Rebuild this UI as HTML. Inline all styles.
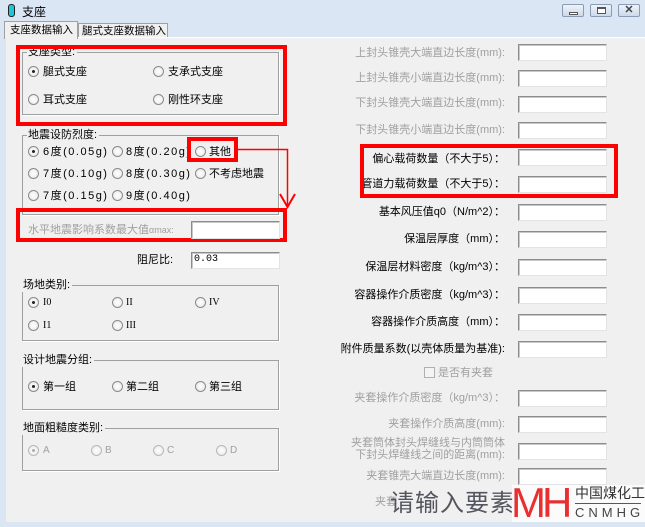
<!DOCTYPE html>
<html><head><meta charset="utf-8"><style>
*{margin:0;padding:0;box-sizing:border-box}
body{width:645px;height:527px;overflow:hidden;background:#dbe6f4;font-family:"Liberation Sans","Noto Sans CJK SC","WenQuanYi Zen Hei",sans-serif;font-size:11px;color:#000;position:relative}
.a{position:absolute;white-space:nowrap;line-height:14px}
.panel{position:absolute;left:6px;top:37px;width:639px;height:485px;background:#f0f0f0;border-top:1px solid #fff}
.grp{position:absolute;border:1px solid #a0a0a0;box-shadow:1px 1px 0 #fff}
.leg{position:absolute;background:#f0f0f0;padding:0 2px 0 1px;line-height:14px;font-size:11px}
.r{position:absolute;width:11px;height:11px;border-radius:50%;border:1px solid #8a8a8a;background:radial-gradient(#fff,#e6e6e6)}
.r.on::after{content:"";position:absolute;left:3px;top:3px;width:3px;height:3px;border-radius:50%;background:#222}
.r.dis{border-color:#b8b8b8}
.r.dis.on::after{background:#aaa}
.in{position:absolute;background:#fff;border:1px solid #8c8c8c;border-right-color:#e3e3e3;border-bottom-color:#e3e3e3;box-shadow:inset 1px 1px 0 #c8c8c8}
.g{color:#a0a0a0}
.red{position:absolute;border:4px solid #ff0000}
.lbl{position:absolute;right:140px;white-space:nowrap;line-height:14px;text-align:right}
.btn{position:absolute;top:4px;width:22px;height:13px;border:1px solid #8b9bb5;border-radius:2px;background:linear-gradient(#eef3fa,#cdd9ea)}
.d{letter-spacing:1.5px}
</style></head><body>
<div style="position:absolute;left:8px;top:4px;width:7px;height:13px;border-radius:3px;background:#1fc7d6;border:1px solid #222"></div>
<div class="a" style="left:22px;top:5px;font-size:12px">支座</div>
<div class="btn" style="left:562px"><div style="position:absolute;left:6px;top:7px;width:9px;height:3px;border:1px solid #555;background:#fff"></div></div>
<div class="btn" style="left:590px"><div style="position:absolute;left:6px;top:2px;width:9px;height:7px;border:1px solid #555;border-top-width:2px;background:#fff"></div></div>
<div class="btn" style="left:618px;text-align:center;line-height:11px;font-size:11px;font-weight:bold;color:#444">✕</div>
<div style="position:absolute;left:4px;top:21px;width:74px;height:18px;background:#f0f0f0;border:1px solid #a0a0a0;border-bottom:none;z-index:2"></div>
<div class="a" style="left:10px;top:23px;z-index:3;font-size:10.5px">支座数据输入</div>
<div style="position:absolute;left:78px;top:23px;width:90px;height:15px;background:#f0f0f0;border:1px solid #a0a0a0;border-bottom:none"></div>
<div class="a" style="left:82px;top:24px;font-size:10.5px">腿式支座数据输入</div>
<div class="panel"></div>

<div class="grp" style="left:22px;top:52px;width:257px;height:63px"></div>
<div class="leg" style="left:27px;top:45px">支座类型:</div>
<div class="r on" style="left:28px;top:66px"></div><div class="a" style="left:43px;top:65px">腿式支座</div>
<div class="r" style="left:153px;top:66px"></div><div class="a" style="left:168px;top:65px">支承式支座</div>
<div class="r" style="left:28px;top:94px"></div><div class="a" style="left:43px;top:93px">耳式支座</div>
<div class="r" style="left:153px;top:94px"></div><div class="a" style="left:168px;top:93px">刚性环支座</div>
<div class="red" style="left:16px;top:45px;width:271px;height:81px"></div>

<div class="grp" style="left:22px;top:135px;width:257px;height:80px"></div>
<div class="leg" style="left:27px;top:128px">地震设防烈度:</div>
<div class="r on" style="left:28px;top:146px"></div><div class="a d" style="left:43px;top:145px">6度(0.05g)</div>
<div class="r" style="left:112px;top:146px"></div><div class="a d" style="left:126px;top:145px">8度(0.20g)</div>
<div class="r" style="left:195px;top:146px"></div><div class="a" style="left:209px;top:145px">其他</div>
<div class="r" style="left:28px;top:168px"></div><div class="a d" style="left:43px;top:167px">7度(0.10g)</div>
<div class="r" style="left:112px;top:168px"></div><div class="a d" style="left:126px;top:167px">8度(0.30g)</div>
<div class="r" style="left:195px;top:168px"></div><div class="a" style="left:209px;top:167px">不考虑地震</div>
<div class="r" style="left:28px;top:190px"></div><div class="a d" style="left:43px;top:189px">7度(0.15g)</div>
<div class="r" style="left:112px;top:190px"></div><div class="a d" style="left:126px;top:189px">9度(0.40g)</div>
<div class="red" style="left:187px;top:137px;width:51px;height:25px"></div>
<svg style="position:absolute;left:236px;top:145px" width="64" height="66"><path d="M2 4.5H51.5V60" stroke="#f00" stroke-width="1.5" fill="none"/><path d="M44 49L51.5 62L59 49" stroke="#f00" stroke-width="2" fill="none"/></svg>
<div class="red" style="left:16px;top:208px;width:271px;height:34px"></div>
<div class="a g" style="left:28px;top:223px">水平地震影响系数最大值<span style="font-size:9px">αmax:</span></div>
<div class="in" style="left:191px;top:221px;width:89px;height:18px"></div>

<div class="a" style="left:137px;top:253px">阻尼比:</div>
<div class="in" style="left:191px;top:252px;width:89px;height:17px"><span style="position:absolute;left:2px;top:1px;font-size:10px;font-family:'Liberation Mono',monospace">0.03</span></div>

<div class="grp" style="left:22px;top:285px;width:257px;height:56px"></div>
<div class="leg" style="left:22px;top:278px">场地类别:</div>
<div class="r on" style="left:28px;top:297px"></div><div class="a" style="left:43px;top:296px;font-family:'Liberation Serif',serif;font-size:10px">I0</div>
<div class="r" style="left:112px;top:297px"></div><div class="a" style="left:126px;top:296px;font-family:'Liberation Serif',serif;font-size:10px">II</div>
<div class="r" style="left:195px;top:297px"></div><div class="a" style="left:209px;top:296px;font-family:'Liberation Serif',serif;font-size:10px">IV</div>
<div class="r" style="left:28px;top:320px"></div><div class="a" style="left:43px;top:319px;font-family:'Liberation Serif',serif;font-size:10px">I1</div>
<div class="r" style="left:112px;top:320px"></div><div class="a" style="left:126px;top:319px;font-family:'Liberation Serif',serif;font-size:10px">III</div>

<div class="grp" style="left:22px;top:360px;width:257px;height:50px"></div>
<div class="leg" style="left:22px;top:353px">设计地震分组:</div>
<div class="r on" style="left:28px;top:381px"></div><div class="a" style="left:43px;top:380px">第一组</div>
<div class="r" style="left:112px;top:381px"></div><div class="a" style="left:126px;top:380px">第二组</div>
<div class="r" style="left:195px;top:381px"></div><div class="a" style="left:209px;top:380px">第三组</div>

<div class="grp" style="left:22px;top:428px;width:257px;height:43px"></div>
<div class="leg" style="left:22px;top:421px">地面粗糙度类别:</div>
<div class="r dis on" style="left:28px;top:445px"></div><div class="a g" style="left:43px;top:444px;font-size:10px">A</div>
<div class="r dis" style="left:91px;top:445px"></div><div class="a g" style="left:105px;top:444px;font-size:10px">B</div>
<div class="r dis" style="left:153px;top:445px"></div><div class="a g" style="left:167px;top:444px;font-size:10px">C</div>
<div class="r dis" style="left:216px;top:445px"></div><div class="a g" style="left:230px;top:444px;font-size:10px">D</div>

<div class="lbl g" style="top:46px">上封头锥壳大端直边长度(mm):</div><div class="in" style="left:518px;top:44px;width:89px;height:17px"></div>
<div class="lbl g" style="top:71px">上封头锥壳小端直边长度(mm):</div><div class="in" style="left:518px;top:70px;width:89px;height:17px"></div>
<div class="lbl g" style="top:96px">下封头锥壳大端直边长度(mm):</div><div class="in" style="left:518px;top:96px;width:89px;height:17px"></div>
<div class="lbl g" style="top:123px">下封头锥壳小端直边长度(mm):</div><div class="in" style="left:518px;top:122px;width:89px;height:17px"></div>
<div class="lbl" style="top:152px">偏心载荷数量（不大于5）：</div><div class="in" style="left:518px;top:149px;width:89px;height:17px"></div>
<div class="lbl" style="top:177px">管道力载荷数量（不大于5）：</div><div class="in" style="left:518px;top:176px;width:89px;height:17px"></div>
<div class="red" style="left:360px;top:144px;width:258px;height:54px"></div>
<div class="lbl" style="top:205px">基本风压值q0（N/m^2）：</div><div class="in" style="left:518px;top:204px;width:89px;height:17px"></div>
<div class="lbl" style="top:232px">保温层厚度（mm）：</div><div class="in" style="left:518px;top:231px;width:89px;height:17px"></div>
<div class="lbl" style="top:260px">保温层材料密度（kg/m^3）：</div><div class="in" style="left:518px;top:259px;width:89px;height:17px"></div>
<div class="lbl" style="top:288px">容器操作介质密度（kg/m^3）：</div><div class="in" style="left:518px;top:287px;width:89px;height:17px"></div>
<div class="lbl" style="top:315px">容器操作介质高度（mm）：</div><div class="in" style="left:518px;top:314px;width:89px;height:17px"></div>
<div class="lbl" style="top:342px">附件质量系数(以壳体质量为基准):</div><div class="in" style="left:518px;top:341px;width:89px;height:17px"></div>
<div style="position:absolute;left:424px;top:367px;width:11px;height:11px;border:1px solid #b0b0b0;background:#f4f4f4"></div>
<div class="a g" style="left:438px;top:366px">是否有夹套</div>
<div class="lbl g" style="top:391px">夹套操作介质密度（kg/m^3）：</div><div class="in" style="left:518px;top:390px;width:89px;height:17px"></div>
<div class="lbl g" style="top:417px">夹套操作介质高度(mm):</div><div class="in" style="left:518px;top:416px;width:89px;height:17px"></div>
<div class="lbl g" style="top:437px;line-height:12px">夹套筒体封头焊缝线与内筒筒体<br>下封头焊缝线之间的距离(mm):</div><div class="in" style="left:518px;top:443px;width:89px;height:17px"></div>
<div class="lbl g" style="top:469px">夹套锥壳大端直边长度(mm):</div><div class="in" style="left:518px;top:468px;width:89px;height:17px"></div>
<div class="a g" style="left:375px;top:495px">夹套</div>

<div class="a" style="left:390px;top:490px;font-size:24px;line-height:28px;color:#3a3a46;letter-spacing:1px;opacity:.85">请输入要素</div>
<div style="position:absolute;left:512px;top:485px;width:133px;height:37px;background:rgba(255,255,255,0.75)"></div>
<div class="a" style="left:511px;top:483px;font-size:42px;line-height:40px;color:#e83030;letter-spacing:-4px">MH</div>
<div class="a" style="left:575px;top:485px;font-size:14px;line-height:16px;color:#333">中国煤化工</div>
<div style="position:absolute;left:575px;top:503px;width:66px;height:1px;background:#e02020"></div>
<div class="a" style="left:575px;top:506px;font-size:13px;line-height:14px;color:#444;letter-spacing:4px">CNMHG</div>
</body></html>
